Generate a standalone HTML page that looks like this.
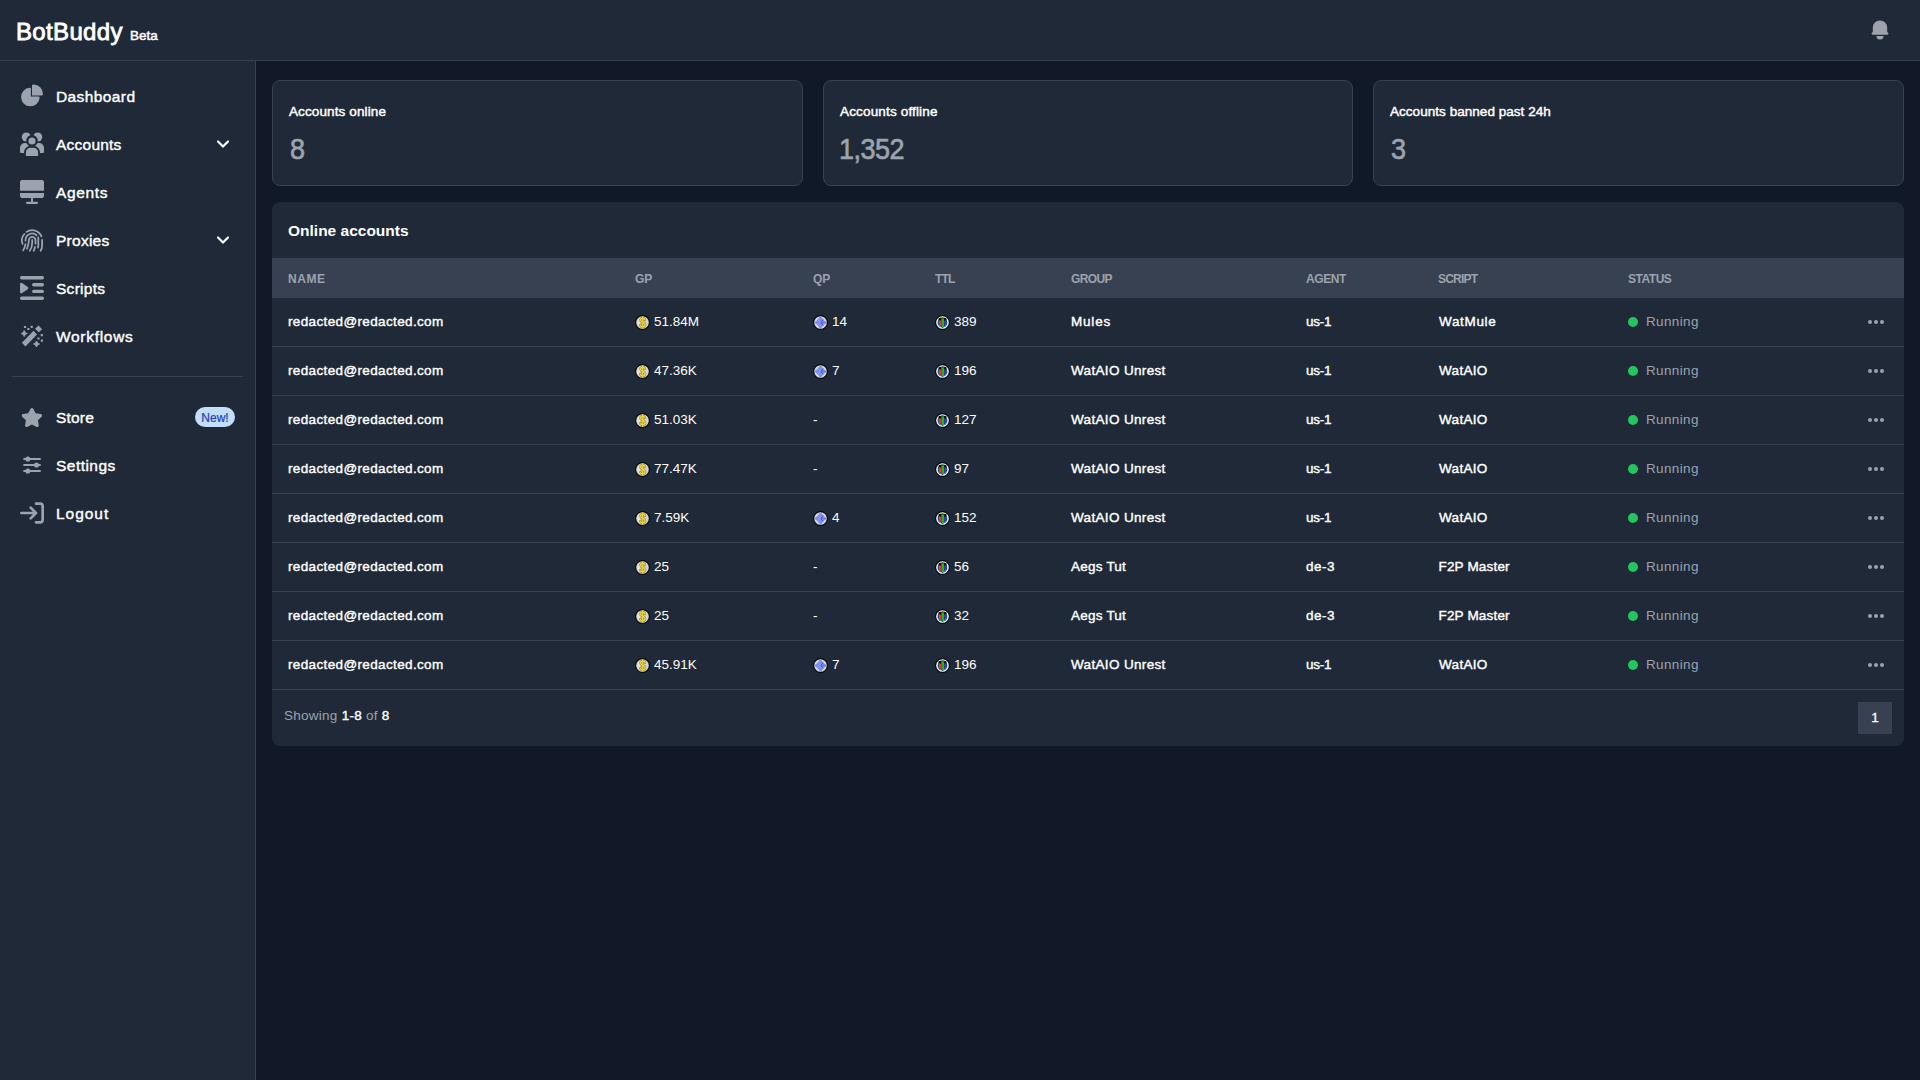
<!DOCTYPE html>
<html lang="en">
<head>
<meta charset="utf-8">
<title>BotBuddy</title>
<style>
*{box-sizing:border-box;margin:0;padding:0}
html,body{width:1920px;height:1080px;overflow:hidden;background:#111827;color:#fff;
  font-family:"Liberation Sans",sans-serif;}
body{position:relative}
span[class^="k-"]{display:inline-block}
/* header */
.hdr{position:absolute;left:0;top:0;width:1920px;height:61px;background:#1f2937;border-bottom:1px solid #374151}
.logo{position:absolute;left:16px;top:16px;height:32px;line-height:32px;font-size:24px;font-weight:400;-webkit-text-stroke:.8px #fff;white-space:nowrap}
.beta{position:absolute;left:130px;top:26px;height:20px;line-height:20px;font-size:13.5px;font-weight:400;-webkit-text-stroke:.5px #fff;white-space:nowrap}
.bell{position:absolute;left:1868px;top:18px;width:24px;height:24px;color:#9ca3af}
/* sidebar */
.side{position:absolute;left:0;top:61px;width:256px;height:1019px;background:#1f2937;border-right:1px solid #374151}
.nav{position:absolute;left:12px;width:231px;height:40px}
.nav svg.ic{position:absolute;left:8px;top:8px;width:24px;height:24px;color:#9ca3af;overflow:visible}
.nav .t{position:absolute;left:44px;top:9px;height:24px;line-height:24px;font-size:15.5px;font-weight:400;-webkit-text-stroke:.4px #fff;white-space:nowrap}
.nav svg.chev{position:absolute;left:205px;top:14px;width:12px;height:12px;color:#fff}
.divider{position:absolute;left:12px;top:315px;width:231px;height:1px;background:#374151}
.badge{position:absolute;left:183px;top:10px;width:40px;height:20px;border-radius:10px;background:#c3ddfd;color:#1e429f;
  font-size:12px;line-height:23px;text-align:center;-webkit-text-stroke:.2px #1e40af;color:#1e40af}
/* cards */
.card{position:absolute;top:80px;height:106px;background:#1f2937;border:1px solid #374151;border-radius:8px}
.card .l{position:absolute;left:16px;top:21px;height:20px;line-height:20px;font-size:13.5px;font-weight:400;-webkit-text-stroke:.45px #fff;white-space:nowrap}
.card .v{position:absolute;left:16px;top:50px;height:36px;line-height:36px;font-size:30px;font-weight:400;-webkit-text-stroke:.7px #9ca3af;color:#9ca3af;white-space:nowrap}
.card .v span{transform:scaleX(.9);transform-origin:0 0}
/* table card */
.tc{position:absolute;left:272px;top:202px;width:1632px;height:544px;background:#1f2937;border-radius:8px;overflow:hidden}
.tc h2{position:absolute;left:16px;top:17px;height:24px;line-height:24px;font-size:15.5px;font-weight:700;white-space:nowrap}
table{position:absolute;left:0;top:56px;width:1632px;border-collapse:separate;border-spacing:0;table-layout:fixed}
th{height:40px;background:#374151;color:#9ca3af;font-size:12px;font-weight:700;text-align:left;padding:2px 0 0 16px;white-space:nowrap;text-transform:uppercase}
td{height:49px;border-bottom:1px solid #374151;font-size:13.5px;padding:0 0 1px 16px;white-space:nowrap;vertical-align:middle}
td.b{font-weight:400;-webkit-text-stroke:.4px #fff}
td.s{color:#9ca3af}
.dot{display:inline-block;width:10px;height:10px;border-radius:50%;background:#22c55e;margin-right:8px;vertical-align:-0.5px}
.coin{display:inline-block;width:15px;height:15px;vertical-align:-4px;margin-right:4px}
.more{display:block;width:20px;height:20px;color:#9ca3af;margin-left:-1px}
.foot{position:absolute;left:12px;top:502px;height:24px;line-height:24px;font-size:13.5px;color:#9ca3af;white-space:nowrap}
.foot b{color:#fff;font-weight:400;-webkit-text-stroke:.4px #fff}
.pg{position:absolute;left:1586px;top:500px;width:34px;height:32px;background:#374151;color:#fff;font-size:13.5px;line-height:32px;text-align:center;-webkit-text-stroke:.3px #fff}

.k-accounts{letter-spacing:0.23px}
.k-accountsbannedpast24h{letter-spacing:0.04px}
.k-accountsoffline{letter-spacing:0.16px}
.k-accountsonline{letter-spacing:0.12px}
.k-aegstut{letter-spacing:0.22px}
.k-agents{letter-spacing:0.64px}
.k-dashboard{letter-spacing:0.40px}
.k-de3{letter-spacing:0.53px}
.k-email{letter-spacing:0.36px}
.k-f2pmaster{letter-spacing:0.17px;margin-left:0.50px}
.k-foot{letter-spacing:0.26px}
.k-logo{letter-spacing:0.34px}
.k-logout{letter-spacing:0.96px}
.k-mules{letter-spacing:0.80px}
.k-proxies{letter-spacing:0.26px}
.k-running{letter-spacing:0.35px}
.k-scripts{letter-spacing:0.27px}
.k-settings{letter-spacing:0.46px}
.k-store{letter-spacing:0.20px}
.k-thagent{letter-spacing:-0.40px}
.k-thgroup{letter-spacing:-0.60px}
.k-thname{letter-spacing:0.53px}
.k-thscript{letter-spacing:-0.80px}
.k-thstatus{letter-spacing:-0.48px}
.k-thttl{letter-spacing:-0.80px}
.k-us1{letter-spacing:-0.27px}
.k-v0{margin-left:1.00px}
.k-v1{letter-spacing:-0.55px;margin-left:-0.60px}
.k-v2{margin-left:1.00px}
.k-wataio{letter-spacing:0.32px;margin-left:1.00px}
.k-wataiounrest{letter-spacing:0.34px}
.k-watmule{letter-spacing:0.67px;margin-left:1.00px}
.k-workflows{letter-spacing:0.70px}
</style>
</head>
<body>
<svg width="0" height="0" style="position:absolute">
  <defs>
    <symbol id="gp" viewBox="0 0 15 15">
      <circle cx="7.5" cy="7.5" r="7.4" fill="#05070b"/>
      <circle cx="7.5" cy="7.5" r="6.3" fill="#d4d4da"/>
      <path d="M5.2 2.2A6.300 6.300 0 0 0 5.200 12.800Z" fill="#e4e4e8"/>
      <path d="M7.7 1.2V13.800" stroke="#9c8826" stroke-width="2.400" fill="none"/>
      <path d="M9.900 4.700C9.500 3.600 8.600 3.200 7.700 3.200 6.300 3.200 5.500 4 5.500 5.100 5.500 6.300 6.500 6.800 7.700 7.300 9 7.800 10 8.400 10 9.700 10 10.900 9 11.700 7.700 11.700 6.500 11.700 5.600 11.200 5.200 10.200" stroke="#9c8826" stroke-width="2.600" fill="none" stroke-linecap="round"/>
      <path d="M7.700 1.300V13.700" stroke="#ecd43e" stroke-width="1.200" fill="none"/>
      <path d="M9.900 4.700C9.500 3.600 8.600 3.200 7.700 3.200 6.300 3.200 5.500 4 5.500 5.100 5.500 6.300 6.500 6.800 7.700 7.300 9 7.800 10 8.400 10 9.700 10 10.900 9 11.700 7.700 11.700 6.500 11.700 5.600 11.200 5.200 10.200" stroke="#ecd43e" stroke-width="1.500" fill="none" stroke-linecap="round"/>
    </symbol>
    <symbol id="qp" viewBox="0 0 15 15">
      <circle cx="7.5" cy="7.5" r="7.4" fill="#05070b"/>
      <circle cx="7.5" cy="7.5" r="6.3" fill="#d9d8d2"/>
      <path d="M7.5 2.100Q9.400 5.600 12.900 7.500 9.400 9.400 7.500 12.900 5.600 9.400 2.100 7.500 5.600 5.600 7.500 2.100Z" fill="#7b90f2" stroke="#7b90f2" stroke-width="1.400" stroke-linejoin="round"/>
      <path d="M7.500 7.500L4.500 4.500M7.500 7.500L4.500 10.500" stroke="#cfa4f4" stroke-width=".7" stroke-dasharray="1 .5"/>
      <path d="M7.900 7.100L10.400 4.600M7.900 7.900L10.400 10.400" stroke="#3d4ae6" stroke-width=".9"/>
      <path d="M7.600 7.500H12.400" stroke="#5d72ea" stroke-width="1.100"/>
    </symbol>
    <symbol id="ttl" viewBox="0 0 15 15">
      <circle cx="7.5" cy="7.5" r="7.400" fill="#05070b"/>
      <circle cx="7.5" cy="7.500" r="6.300" fill="#ffffff"/>
      <circle cx="7.5" cy="7.700" r="5" fill="#3a8cff"/>
      <path d="M3.500 3.300Q7.500 1.700 11.500 3.300V9.200L7.500 12.700 3.500 9.200Z" fill="#05070b"/>
      <path d="M4.100 5.400H6.200V11.200L4.100 9.400Z" fill="#ff2a2a"/>
      <path d="M4.100 5.400H4.800V10L4.100 9.400Z" fill="#c8661a"/>
      <path d="M6.300 3.300H9.200V12H6.300Z" fill="#1fb80e"/>
      <path d="M9.300 5.400H11.100V9.400L9.300 11.200Z" fill="#3b3fe0"/>
    </symbol>
  </defs>
</svg>
<div class="hdr">
  <div class="logo"><span class="k-logo">BotBuddy</span></div>
  <div class="beta"><span class="k-beta">Beta</span></div>
  <svg class="bell" viewBox="0 0 20 20" fill="currentColor"><path d="M10 2a6 6 0 00-6 6v3.586l-.707.707A1 1 0 004 14h12a1 1 0 00.707-1.707L16 11.586V8a6 6 0 00-6-6zM10 18a3 3 0 01-3-3h6a3 3 0 01-3 3z"/></svg>
</div>
<div class="side">
  <div class="nav" style="top:15px"><svg class="ic" viewBox="0 0 22 21" fill="currentColor"><path d="M16.975 11H10V4.025a1 1 0 0 0-1.066-.998 8.5 8.5 0 1 0 9.039 9.039.999.999 0 0 0-1-1.066h.002Z"/><path d="M12.5 0c-.157 0-.311.01-.565.027A1 1 0 0 0 11 1.02V10h8.975a1 1 0 0 0 1-.935c.013-.188.028-.374.028-.565A8.51 8.51 0 0 0 12.5 0Z"/></svg><span class="t"><span class="k-dashboard">Dashboard</span></span></div>
  <div class="nav" style="top:63px"><svg class="ic" viewBox="0 0 24 24" fill="currentColor"><circle cx="6.3" cy="5" r="4.55"/><circle cx="17.7" cy="5" r="4.55"/><path d="M1 21A1 1 0 0 1 0 20V16.1A5 5 0 0 1 5 11.1H10V21Z"/><path d="M23 21A1 1 0 0 0 24 20V16.100A5 5 0 0 0 19 11.100H14V21Z"/><circle cx="12" cy="8.9" r="5.900" fill="#1f2937"/><path d="M5.900 24.500V20.300A4.600 4.600 0 0 1 10.500 15.700H13.500A4.600 4.600 0 0 1 18.100 20.300V24.500Z" fill="#1f2937" stroke="#1f2937" stroke-width="3.700" stroke-linejoin="round"/><circle cx="12" cy="9" r="3.600"/><path d="M5.900 24V20.300A4.600 4.600 0 0 1 10.500 15.700H13.500A4.600 4.600 0 0 1 18.100 20.300V24Z"/></svg><span class="t"><span class="k-accounts">Accounts</span></span><svg class="chev" viewBox="0 0 12 12" fill="none" stroke="currentColor" stroke-width="2.15" stroke-linecap="round" stroke-linejoin="round"><path d="M1 3.5l5 5 5-5"/></svg></div>
  <div class="nav" style="top:111px"><svg class="ic" viewBox="0 0 24 24" fill="currentColor"><path d="M0 10.800V2A2 2 0 0 1 2 0H22A2 2 0 0 1 24 2V10.800Z"/><path d="M0 13.100H24V15.900A2 2 0 0 1 22 17.900H12.950V21.700H16.900A1.150 1.150 0 0 1 16.900 24H7.100A1.150 1.150 0 0 1 7.100 21.700H11.050V17.900H2A2 2 0 0 1 0 15.900Z"/></svg><span class="t"><span class="k-agents">Agents</span></span></div>
  <div class="nav" style="top:159px"><svg class="ic" viewBox="-.2 -.4 24 24" fill="none" stroke="currentColor" stroke-width="1.800" stroke-linecap="round"><path d="M6.300 3.500A10 10 0 0 1 21.200 7.900"/><path d="M4.200 5.600A10 10 0 0 0 2.300 15.500"/><path d="M21.900 11.400V17Q21.900 20 20.400 22.400"/><path d="M5.300 12.300A6.700 6.700 0 0 1 16.400 6.800"/><path d="M18.100 9V14Q18.300 17 17.900 19.100"/><path d="M6.800 20.300Q8.700 16 8.700 11.700A3.300 3.300 0 0 1 15.300 11.700V15.300"/><path d="M12 11.400V14Q12 19 9.600 22.400"/><path d="M5.300 15.700Q4.600 19.200 3 22"/><path d="M14.800 18.500Q14.400 20.800 13.500 22.400"/></svg><span class="t"><span class="k-proxies">Proxies</span></span><svg class="chev" viewBox="0 0 12 12" fill="none" stroke="currentColor" stroke-width="2.15" stroke-linecap="round" stroke-linejoin="round"><path d="M1 3.5l5 5 5-5"/></svg></div>
  <div class="nav" style="top:207px"><svg class="ic" viewBox="0 0 24 24" fill="currentColor"><rect x="0" y="0" width="24" height="3.400" rx="1.700"/><rect x="0" y="20.600" width="24" height="3.400" rx="1.700"/><rect x="12" y="7" width="12" height="3.400" rx="1.700"/><rect x="12" y="13.700" width="12" height="3.400" rx="1.700"/><path d="M1.350 8.200L7 12.100L1.350 16Z" stroke="currentColor" stroke-width="2.700" stroke-linejoin="round"/></svg><span class="t"><span class="k-scripts">Scripts</span></span></div>
  <div class="nav" style="top:255px"><svg class="ic" viewBox="0 0 24 24" fill="currentColor"><path d="M13.500 6.800L17 10.400L5.500 22.400L1.900 18.800Z"/><path d="M18.500 1.600L22.100 5.200L18.800 8.300L15 4.700Z"/><rect x="3.90" y="1.90" width="2.2" height="2.2" rx=".3"/><rect x="10.60" y="1.70" width="2.2" height="2.2" rx=".3"/><rect x="7.30" y="3.90" width="2.2" height="2.2" rx=".3"/><rect x="20.70" y="10.00" width="2.2" height="2.2" rx=".3"/><rect x="17.40" y="13.40" width="2.2" height="2.2" rx=".3"/><rect x="20.80" y="15.60" width="2.2" height="2.2" rx=".3"/><path d="M4.2 6.4Q4.70 9.00 7.300000000000001 9.5Q4.70 10.00 4.2 12.6Q3.70 10.00 1.1 9.5Q3.70 9.00 4.2 6.4Z" stroke="currentColor" stroke-width=".9" stroke-linejoin="round"/><path d="M16.5 17.0Q16.98 19.52 19.5 20Q16.98 20.48 16.5 23.0Q16.02 20.48 13.5 20Q16.02 19.52 16.5 17.0Z" stroke="currentColor" stroke-width=".9" stroke-linejoin="round"/></svg><span class="t"><span class="k-workflows">Workflows</span></span></div>
  <div class="divider"></div>
  <div class="nav" style="top:336px"><svg class="ic" viewBox="0 0 24 24" fill="currentColor"><g transform="translate(.7 2.5) scale(1.02 1)"><path d="M20.924 7.625a1.523 1.523 0 0 0-1.238-1.044l-5.051-.734-2.259-4.577a1.534 1.534 0 0 0-2.752 0L7.365 5.847l-5.051.734A1.535 1.535 0 0 0 1.463 9.2l3.656 3.563-.863 5.031a1.532 1.532 0 0 0 2.226 1.616L11 17.033l4.518 2.375a1.534 1.534 0 0 0 2.226-1.617l-.863-5.03L20.537 9.200a1.523 1.523 0 0 0 .387-1.575Z"/></g></svg><span class="t"><span class="k-store">Store</span></span><span class="badge"><span class="k-new">New!</span></span></div>
  <div class="nav" style="top:384px"><svg class="ic" viewBox="0 0 24 24" fill="currentColor" stroke="currentColor" stroke-width="1.900" stroke-linecap="round"><path d="M4.100 6H20M4.100 12H20M4.100 18H20" fill="none"/><circle cx="7.900" cy="6" r="1.600"/><circle cx="16.500" cy="12" r="1.600"/><circle cx="7.900" cy="18" r="1.600"/></svg><span class="t"><span class="k-settings">Settings</span></span></div>
  <div class="nav" style="top:432px"><svg class="ic" viewBox="0 0 18 16" fill="none" stroke="currentColor" stroke-width="2" stroke-linecap="round" stroke-linejoin="round"><path d="M1 8h11m0 0L8 4m4 4-4 4m4-11h3a2 2 0 0 1 2 2v10a2 2 0 0 1-2 2h-3"/></svg><span class="t"><span class="k-logout">Logout</span></span></div>
</div>

<div class="card" style="left:272px;width:531px"><div class="l"><span class="k-accountsonline">Accounts online</span></div><div class="v"><span class="k-v0">8</span></div></div>
<div class="card" style="left:823px;width:530px"><div class="l"><span class="k-accountsoffline">Accounts offline</span></div><div class="v"><span class="k-v1">1,352</span></div></div>
<div class="card" style="left:1373px;width:531px"><div class="l"><span class="k-accountsbannedpast24h">Accounts banned past 24h</span></div><div class="v"><span class="k-v2">3</span></div></div>

<div class="tc">
  <h2><span class="k-h2">Online accounts</span></h2>
  <table>
    <colgroup><col style="width:347px"><col style="width:178px"><col style="width:122px"><col style="width:136px"><col style="width:235px"><col style="width:132px"><col style="width:190px"><col style="width:239px"><col style="width:53px"></colgroup>
    <thead><tr><th><span class="k-thname">Name</span></th><th><span class="k-thgp">GP</span></th><th><span class="k-thqp">QP</span></th><th><span class="k-thttl">TTL</span></th><th><span class="k-thgroup">Group</span></th><th><span class="k-thagent">Agent</span></th><th><span class="k-thscript">Script</span></th><th><span class="k-thstatus">Status</span></th><th></th></tr></thead>
    <tbody>
      <tr><td class="b"><span class="k-email">redacted@redacted.com</span></td><td><svg class="coin"><use href="#gp"/></svg><span class="n k-num">51.84M</span></td><td><svg class="coin"><use href="#qp"/></svg><span class="n k-num">14</span></td><td><svg class="coin"><use href="#ttl"/></svg><span class="n k-num">389</span></td><td class="b"><span class="k-mules">Mules</span></td><td class="b"><span class="k-us1">us-1</span></td><td class="b"><span class="k-watmule">WatMule</span></td><td class="s"><i class="dot"></i><span class="k-running">Running</span></td><td><svg class="more" viewBox="0 0 20 20" fill="currentColor"><circle cx="4" cy="10" r="2"/><circle cx="10" cy="10" r="2"/><circle cx="16" cy="10" r="2"/></svg></td></tr>
      <tr><td class="b"><span class="k-email">redacted@redacted.com</span></td><td><svg class="coin"><use href="#gp"/></svg><span class="n k-num">47.36K</span></td><td><svg class="coin"><use href="#qp"/></svg><span class="n k-num">7</span></td><td><svg class="coin"><use href="#ttl"/></svg><span class="n k-num">196</span></td><td class="b"><span class="k-wataiounrest">WatAIO Unrest</span></td><td class="b"><span class="k-us1">us-1</span></td><td class="b"><span class="k-wataio">WatAIO</span></td><td class="s"><i class="dot"></i><span class="k-running">Running</span></td><td><svg class="more" viewBox="0 0 20 20" fill="currentColor"><circle cx="4" cy="10" r="2"/><circle cx="10" cy="10" r="2"/><circle cx="16" cy="10" r="2"/></svg></td></tr>
      <tr><td class="b"><span class="k-email">redacted@redacted.com</span></td><td><svg class="coin"><use href="#gp"/></svg><span class="n k-num">51.03K</span></td><td><span class="dash">-</span></td><td><svg class="coin"><use href="#ttl"/></svg><span class="n k-num">127</span></td><td class="b"><span class="k-wataiounrest">WatAIO Unrest</span></td><td class="b"><span class="k-us1">us-1</span></td><td class="b"><span class="k-wataio">WatAIO</span></td><td class="s"><i class="dot"></i><span class="k-running">Running</span></td><td><svg class="more" viewBox="0 0 20 20" fill="currentColor"><circle cx="4" cy="10" r="2"/><circle cx="10" cy="10" r="2"/><circle cx="16" cy="10" r="2"/></svg></td></tr>
      <tr><td class="b"><span class="k-email">redacted@redacted.com</span></td><td><svg class="coin"><use href="#gp"/></svg><span class="n k-num">77.47K</span></td><td><span class="dash">-</span></td><td><svg class="coin"><use href="#ttl"/></svg><span class="n k-num">97</span></td><td class="b"><span class="k-wataiounrest">WatAIO Unrest</span></td><td class="b"><span class="k-us1">us-1</span></td><td class="b"><span class="k-wataio">WatAIO</span></td><td class="s"><i class="dot"></i><span class="k-running">Running</span></td><td><svg class="more" viewBox="0 0 20 20" fill="currentColor"><circle cx="4" cy="10" r="2"/><circle cx="10" cy="10" r="2"/><circle cx="16" cy="10" r="2"/></svg></td></tr>
      <tr><td class="b"><span class="k-email">redacted@redacted.com</span></td><td><svg class="coin"><use href="#gp"/></svg><span class="n k-num">7.59K</span></td><td><svg class="coin"><use href="#qp"/></svg><span class="n k-num">4</span></td><td><svg class="coin"><use href="#ttl"/></svg><span class="n k-num">152</span></td><td class="b"><span class="k-wataiounrest">WatAIO Unrest</span></td><td class="b"><span class="k-us1">us-1</span></td><td class="b"><span class="k-wataio">WatAIO</span></td><td class="s"><i class="dot"></i><span class="k-running">Running</span></td><td><svg class="more" viewBox="0 0 20 20" fill="currentColor"><circle cx="4" cy="10" r="2"/><circle cx="10" cy="10" r="2"/><circle cx="16" cy="10" r="2"/></svg></td></tr>
      <tr><td class="b"><span class="k-email">redacted@redacted.com</span></td><td><svg class="coin"><use href="#gp"/></svg><span class="n k-num">25</span></td><td><span class="dash">-</span></td><td><svg class="coin"><use href="#ttl"/></svg><span class="n k-num">56</span></td><td class="b"><span class="k-aegstut">Aegs Tut</span></td><td class="b"><span class="k-de3">de-3</span></td><td class="b"><span class="k-f2pmaster">F2P Master</span></td><td class="s"><i class="dot"></i><span class="k-running">Running</span></td><td><svg class="more" viewBox="0 0 20 20" fill="currentColor"><circle cx="4" cy="10" r="2"/><circle cx="10" cy="10" r="2"/><circle cx="16" cy="10" r="2"/></svg></td></tr>
      <tr><td class="b"><span class="k-email">redacted@redacted.com</span></td><td><svg class="coin"><use href="#gp"/></svg><span class="n k-num">25</span></td><td><span class="dash">-</span></td><td><svg class="coin"><use href="#ttl"/></svg><span class="n k-num">32</span></td><td class="b"><span class="k-aegstut">Aegs Tut</span></td><td class="b"><span class="k-de3">de-3</span></td><td class="b"><span class="k-f2pmaster">F2P Master</span></td><td class="s"><i class="dot"></i><span class="k-running">Running</span></td><td><svg class="more" viewBox="0 0 20 20" fill="currentColor"><circle cx="4" cy="10" r="2"/><circle cx="10" cy="10" r="2"/><circle cx="16" cy="10" r="2"/></svg></td></tr>
      <tr><td class="b"><span class="k-email">redacted@redacted.com</span></td><td><svg class="coin"><use href="#gp"/></svg><span class="n k-num">45.91K</span></td><td><svg class="coin"><use href="#qp"/></svg><span class="n k-num">7</span></td><td><svg class="coin"><use href="#ttl"/></svg><span class="n k-num">196</span></td><td class="b"><span class="k-wataiounrest">WatAIO Unrest</span></td><td class="b"><span class="k-us1">us-1</span></td><td class="b"><span class="k-wataio">WatAIO</span></td><td class="s"><i class="dot"></i><span class="k-running">Running</span></td><td><svg class="more" viewBox="0 0 20 20" fill="currentColor"><circle cx="4" cy="10" r="2"/><circle cx="10" cy="10" r="2"/><circle cx="16" cy="10" r="2"/></svg></td></tr>
    </tbody>
  </table>
  <div class="foot"><span class="k-foot">Showing <b>1-8</b> of <b>8</b></span></div>
  <div class="pg">1</div>
</div>
</body>
</html>
